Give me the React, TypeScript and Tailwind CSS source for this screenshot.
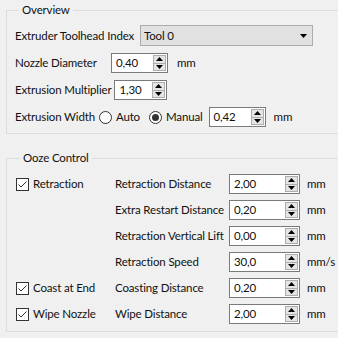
import React from "react";

function Up() {
  return (
    <svg width="7" height="4" viewBox="0 0 7 4">
      <path d="M0 4L3.5 0L7 4Z" fill="#000" />
    </svg>
  );
}

function Down() {
  return (
    <svg width="7" height="4" viewBox="0 0 7 4">
      <path d="M0 0L3.5 4L7 0Z" fill="#000" />
    </svg>
  );
}

function SpinBox({ value, className }: { value: string; className: string }) {
  return (
    <div className={`flex h-[20px] shrink-0 items-stretch border border-[#7a7a7a] bg-white ${className}`}>
      <span className="flex-1 pl-[4px] leading-[18px]">{value}</span>
      <div className="my-[1px] mr-[1px] flex w-[13px] flex-col border border-[#adadad] bg-[#e5e5e5]">
        <div className="flex flex-1 items-center justify-center border-b border-[#adadad]">
          <Up />
        </div>
        <div className="flex flex-1 items-center justify-center">
          <Down />
        </div>
      </div>
    </div>
  );
}

function CheckBox({ label }: { label: string }) {
  return (
    <div className="flex items-center gap-[4px]">
      <span className="flex h-[13px] w-[13px] items-center justify-center border border-[#333] bg-white">
        <svg width="11" height="11" viewBox="0 0 11 11">
          <path d="M1.5 5.5L4 8L9.5 2.5" stroke="#333" strokeWidth="1" fill="none" />
        </svg>
      </span>
      <span>{label}</span>
    </div>
  );
}

function Radio({ label, checked }: { label: string; checked?: boolean }) {
  return (
    <div className="flex shrink-0 items-center gap-[4px]">
      <span className="flex h-[13px] w-[13px] items-center justify-center rounded-full border border-[#333] bg-white">
        {checked && <span className="h-[7px] w-[7px] rounded-full bg-[#333]" />}
      </span>
      <span>{label}</span>
    </div>
  );
}

const oozeRows = [
  { check: "Retraction", label: "Retraction Distance", value: "2,00", unit: "mm" },
  { check: "", label: "Extra Restart Distance", value: "0,20", unit: "mm" },
  { check: "", label: "Retraction Vertical Lift", value: "0,00", unit: "mm" },
  { check: "", label: "Retraction Speed", value: "30,0", unit: "mm/s" },
  { check: "Coast at End", label: "Coasting Distance", value: "0,20", unit: "mm" },
  { check: "Wipe Nozzle", label: "Wipe Distance", value: "2,00", unit: "mm" },
];

export default function App() {
  return (
    <div className="h-[338px] w-[338px] overflow-hidden whitespace-nowrap bg-[#f0f0f0] font-['Lato',sans-serif] text-[11.5px] leading-[16px] tracking-[-0.15px] text-[#111]">
      <fieldset className="ml-[6px] mt-[2px] w-[345px] border border-[#dcdcdc] pb-[6px] pl-[8px]">
        <legend className="ml-[4px] px-[3px] leading-[16px]">Overview</legend>
        <div className="mt-[7px] flex flex-col gap-[7px]">
          <div className="flex h-[21px] items-center">
            <span className="w-[125px] shrink-0">Extruder Toolhead Index</span>
            <div className="flex h-[21px] w-[173px] shrink-0 items-center justify-between border border-[#adadad] bg-[#e1e1e1] pl-[3px] pr-[5px]">
              <span>Tool 0</span>
              <svg width="7" height="4" viewBox="0 0 7 4">
                <path d="M0 0L3.5 4L7 0Z" fill="#000" />
              </svg>
            </div>
          </div>
          <div className="flex h-[20px] items-center">
            <span className="w-[96px] shrink-0">Nozzle Diameter</span>
            <SpinBox value="0,40" className="w-[57px]" />
            <span className="ml-[9px]">mm</span>
          </div>
          <div className="flex h-[20px] items-center gap-[3px]">
            <span className="shrink-0">Extrusion Multiplier</span>
            <SpinBox value="1,30" className="w-[53px]" />
          </div>
          <div className="flex h-[20px] items-center">
            <span className="mr-[4px] shrink-0">Extrusion Width</span>
            <Radio label="Auto" />
            <div className="ml-[9px]">
              <Radio label="Manual" checked />
            </div>
            <SpinBox value="0,42" className="ml-[6px] w-[57px]" />
            <span className="ml-[8px]">mm</span>
          </div>
        </div>
      </fieldset>

      <fieldset className="ml-[6px] mt-[16px] w-[345px] border border-[#dcdcdc] pb-[7px] pl-[9px]">
        <legend className="ml-[4px] px-[3px] leading-[16px]">Ooze Control</legend>
        <div className="mt-[8px] grid grid-cols-[99px_114px_71px_auto] gap-y-[6px]">
          {oozeRows.map((r) => (
            <React.Fragment key={r.label}>
              <div className="flex h-[20px] items-center">{r.check && <CheckBox label={r.check} />}</div>
              <div className="flex h-[20px] items-center">{r.label}</div>
              <SpinBox value={r.value} className="w-[71px]" />
              <div className="ml-[7px] flex h-[20px] items-center">{r.unit}</div>
            </React.Fragment>
          ))}
        </div>
      </fieldset>
    </div>
  );
}
